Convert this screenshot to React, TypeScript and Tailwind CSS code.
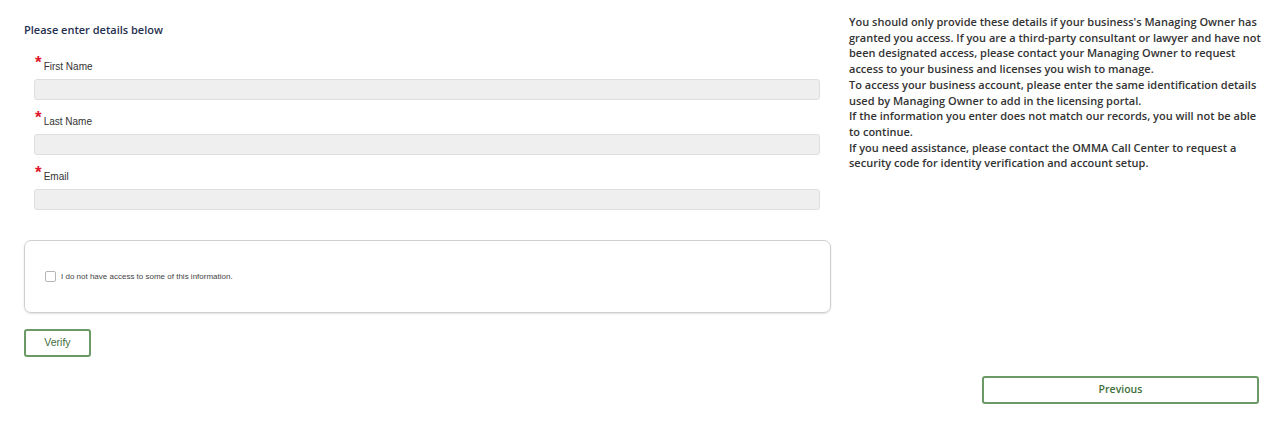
export default function App() {
  const fields = ["First Name", "Last Name", "Email"];

  return (
    <div className="w-[1280px] h-[425px] bg-white relative font-['Liberation_Sans',Arial,sans-serif]">
      <div className="flex pt-[22px]">
        <div className="w-[830px] pl-[24px] shrink-0">
          <h2 className="font-['Open_Sans',sans-serif] font-semibold text-[11px] leading-[16px] text-[#1f3050]">
            Please enter details below
          </h2>
          <div className="pl-[10px] mt-[21px]">
            {fields.map((f) => (
              <div key={f} className="mb-[14px] last:mb-0">
                <div className="flex items-start h-[13px] mb-[7px]">
                  <span className="text-[#e0182d] text-[17px] leading-[13px] font-bold ml-[1px] mr-[2px] -mt-[3px]">*</span>
                  <span className="text-[10px] leading-[13px] text-[#333] mt-[1px]">{f}</span>
                </div>
                <input className="block w-[786px] h-[21px] bg-[#efefef] border border-[#dedede] rounded-[3px]" />
              </div>
            ))}
          </div>
          <div className="mt-[30px] w-[807px] h-[73px] border border-[#cfcfcf] rounded-[7px] shadow-[0_1px_2px_rgba(0,0,0,0.12)] flex items-center pl-[20px]">
            <span className="w-[11px] h-[11px] border border-[#b5b5b5] rounded-[2px] bg-white mr-[5px]" />
            <span className="text-[8px] text-[#444]">I do not have access to some of this information.</span>
          </div>
          <button className="mt-[16px] w-[67px] h-[28px] border-2 border-[#6b9a66] rounded-[3px] text-[10.5px] text-[#3f6f3a] bg-white">
            Verify
          </button>
        </div>
        <div className="ml-[19px] -mt-[8px] w-[412px] font-['Open_Sans',sans-serif] font-semibold text-[11px] leading-[15.7px] text-[#333] whitespace-nowrap">
          <p>
            You should only provide these details if your business's Managing Owner has
            <br />
            granted you access. If you are a third-party consultant or lawyer and have not
            <br />
            been designated access, please contact your Managing Owner to request
            <br />
            access to your business and licenses you wish to manage.
          </p>
          <p>
            To access your business account, please enter the same identification details
            <br />
            used by Managing Owner to add in the licensing portal.
          </p>
          <p>
            If the information you enter does not match our records, you will not be able
            <br />
            to continue.
          </p>
          <p>
            If you need assistance, please contact the OMMA Call Center to request a
            <br />
            security code for identity verification and account setup.
          </p>
        </div>
      </div>
      <div className="flex justify-end pr-[21px] mt-[19px]">
        <button className="w-[277px] h-[28px] border-2 border-[#6b9a66] rounded-[3px] font-['Open_Sans',sans-serif] font-semibold text-[10.5px] text-[#3f6f3a] bg-white">
          Previous
        </button>
      </div>
    </div>
  );
}
